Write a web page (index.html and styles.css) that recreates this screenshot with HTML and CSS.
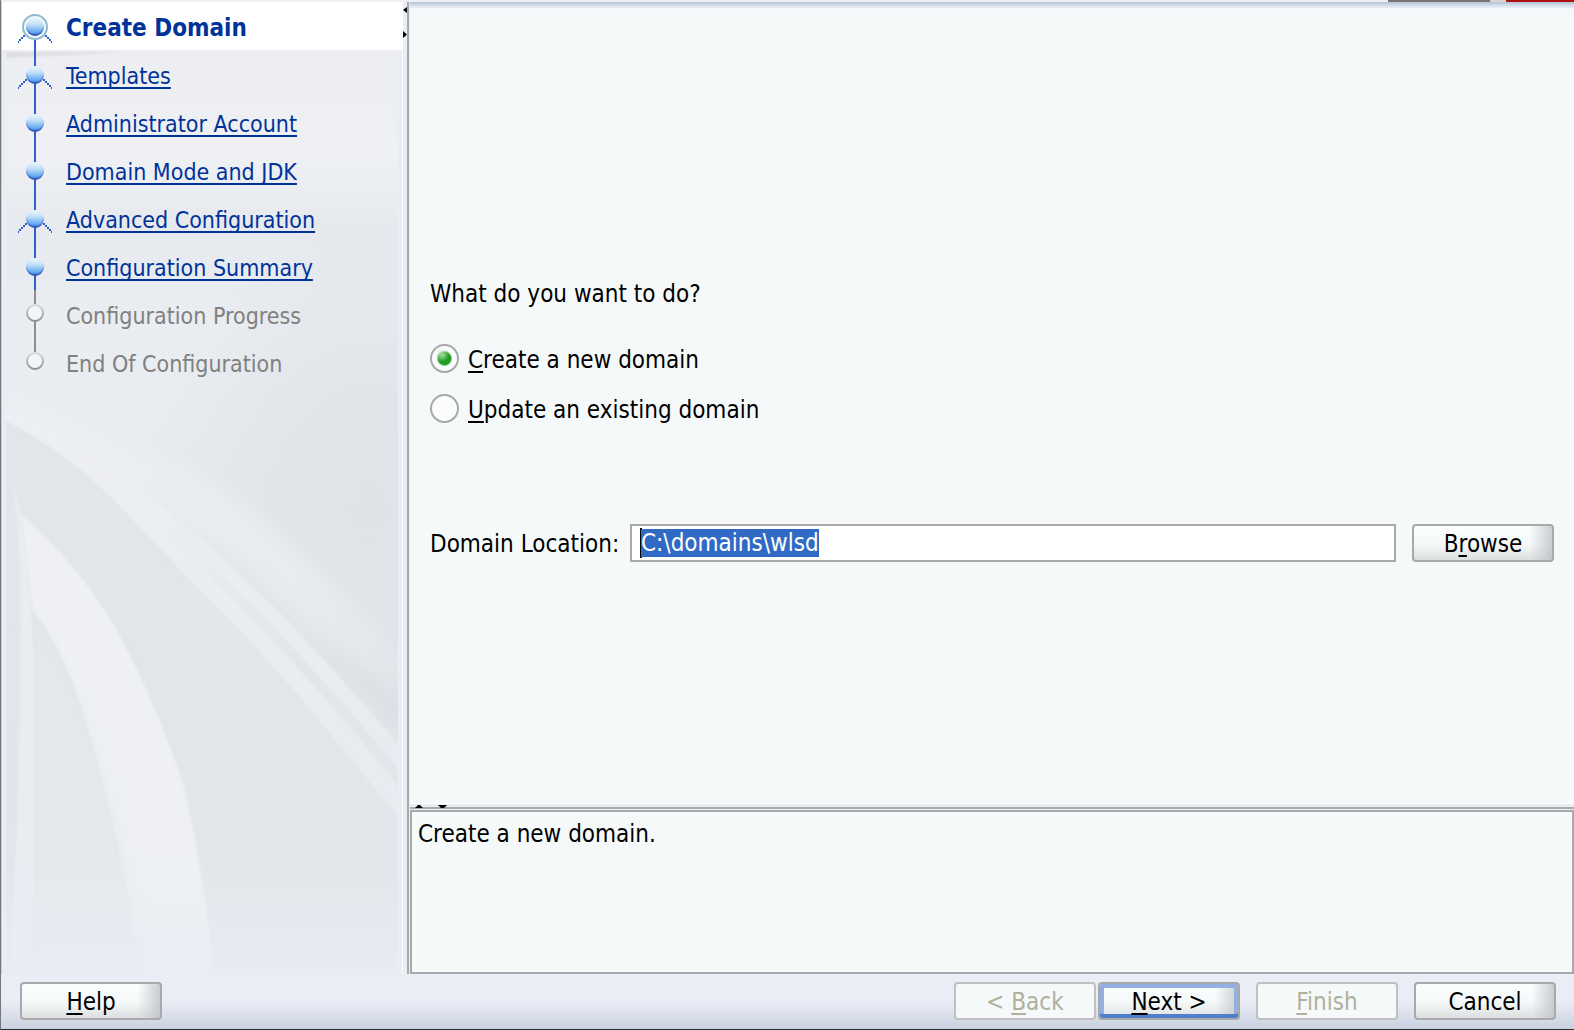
FILE: index.html
```html
<!DOCTYPE html>
<html lang="en">
<head>
<meta charset="utf-8">
<title>Configuration Wizard</title>
<link rel="stylesheet" href="styles.css">
</head>
<body>
<svg class="defs" aria-hidden="true">
  <defs>
    <linearGradient id="ball" x1="0" y1="0" x2="0" y2="1">
      <stop offset="0" stop-color="#eef5fc"/><stop offset=".4" stop-color="#c4e0f8"/>
      <stop offset=".9" stop-color="#5fa6f0"/><stop offset="1" stop-color="#4a86e4"/>
    </linearGradient>
    <linearGradient id="rim" x1="0" y1="0" x2="0" y2="1">
      <stop offset=".3" stop-color="#cfe2f5"/><stop offset=".65" stop-color="#5f8fe0"/><stop offset="1" stop-color="#2a48ac"/>
    </linearGradient>
    <linearGradient id="off" x1="0" y1="0" x2="0" y2="1">
      <stop offset="0" stop-color="#dcdcdc"/><stop offset="1" stop-color="#8e8e8e"/>
    </linearGradient>
    <g id="node"><circle cx="20" cy="25" r="9" fill="url(#rim)"/><circle cx="20" cy="24" r="8" fill="url(#ball)"/></g>
    <path id="legs" d="M12 30h-2v2h-2v2h-2v2h-2v2h-1M28 30h2v2h2v2h2v2h2v2h1" stroke="#2f5fd0" stroke-width="2" stroke-dasharray="2 2"/>
  </defs>
</svg>
<div class="strip"></div>
<main class="wizard">
  <nav class="sidebar" aria-label="Steps">
    <svg class="art" viewBox="6 50 392 924" preserveAspectRatio="none" aria-hidden="true">
      <defs>
        <linearGradient id="base" x1="0" y1="0" x2="0" y2="1">
          <stop offset="0" stop-color="#eceef2"/><stop offset=".12" stop-color="#eef0f4"/>
          <stop offset=".19" stop-color="#e6e9ed"/><stop offset=".3" stop-color="#eaedf1"/>
          <stop offset=".42" stop-color="#e8ebef"/><stop offset=".6" stop-color="#e3e6ea"/><stop offset="1" stop-color="#e1e4e8"/>
        </linearGradient>
        <radialGradient id="shade">
          <stop offset="0" stop-color="#dfe2e7" stop-opacity=".9"/><stop offset=".4" stop-color="#dfe2e7" stop-opacity=".7"/><stop offset="1" stop-color="#dfe2e7" stop-opacity="0"/>
        </radialGradient>
        <linearGradient id="fade" x1="0" y1="0" x2="0" y2="1">
          <stop offset="0" stop-color="#eaedf4" stop-opacity="0"/><stop offset="1" stop-color="#eaedf4" stop-opacity=".8"/>
        </linearGradient>
        <linearGradient id="band" gradientUnits="userSpaceOnUse" x1="60" y1="430" x2="398" y2="720">
          <stop offset="0" stop-color="#ebeef2"/><stop offset=".6" stop-color="#e8ebf0"/><stop offset="1" stop-color="#e2e5e9"/>
        </linearGradient>
        <linearGradient id="rib" gradientUnits="userSpaceOnUse" x1="60" y1="430" x2="398" y2="780">
          <stop offset="0" stop-color="#ecEFF3"/><stop offset="1" stop-color="#e8ebef"/>
        </linearGradient>
        <linearGradient id="core" gradientUnits="userSpaceOnUse" x1="170" y1="530" x2="300" y2="680">
          <stop offset="0" stop-color="#e2e5e9" stop-opacity="0"/><stop offset="1" stop-color="#e2e5e9"/>
        </linearGradient>
        <filter id="s1"><feGaussianBlur stdDeviation="1"/></filter>
        <filter id="s6" x="-20%" y="-20%" width="140%" height="140%"><feGaussianBlur stdDeviation="8"/></filter>
      </defs>
      <rect x="6" y="50" width="392" height="924" fill="url(#base)"/>
      <ellipse cx="370" cy="500" rx="220" ry="290" fill="url(#shade)"/>
      <path d="M6 52H130L6 58Z" fill="#dddfe3" filter="url(#s1)"/>
      <path d="M0 385Q110 425 213 485Q300 540 398 650V710Q280 600 167 510L0 430Z" fill="url(#band)" filter="url(#s6)"/>
      <path d="M200 530Q290 605 410 745V700Q300 635 230 560Z" fill="#dadde2" opacity=".7" filter="url(#s6)"/>
      <path d="M-10 411Q68 449 127 513Q190 575 247 637L300 697L410 830V990H-10Z" fill="#e2e5e9" filter="url(#s1)"/>
      <path d="M-10 400Q90 440 167 510L213 550L280 613L333 670L410 757V831L300 697L247 637L187 577L127 513Q68 449 -10 413Z" fill="url(#rib)" filter="url(#s1)"/>
      <path d="M150 515Q290 640 410 792" fill="none" stroke="url(#core)" stroke-width="10" filter="url(#s1)"/>
      <path d="M21 515Q75 560 115 627Q160 710 185 790Q205 880 215 984H140Q125 850 85 720Q65 650 33 610Z" fill="#eef0f4" filter="url(#s1)"/>
      <path d="M33 625Q75 690 95 760Q125 850 145 984H34Z" fill="#e5e8ec" filter="url(#s6)"/>
      <path d="M8 465Q24 520 20 690Q18 860 8 984H32Q36 800 33 650Q30 560 21 515Z" fill="#e9ecf1" filter="url(#s1)"/>
      <rect x="6" y="850" width="392" height="124" fill="url(#fade)"/>
    </svg>
    <ol class="steps">
      <li class="step current" aria-current="step">
        <svg class="mark" viewBox="0 0 40 48"><path d="M20 38V48" stroke="#2f5fd0" stroke-width="2"/><use href="#legs" y="2"/><circle cx="20" cy="25" r="12" fill="#f3f8fd" stroke="#8dbbd0" stroke-width="2"/><use href="#node"/></svg>
        <span>Create Domain</span></li>
      <li class="step">
        <svg class="mark" viewBox="0 0 40 48"><path d="M20 0V48" stroke="#2f5fd0" stroke-width="2"/><use href="#legs"/><use href="#node"/></svg>
        <a href="#templates">Templates</a></li>
      <li class="step">
        <svg class="mark" viewBox="0 0 40 48"><path d="M20 0V48" stroke="#2f5fd0" stroke-width="2"/><use href="#node"/></svg>
        <a href="#account">Administrator Account</a></li>
      <li class="step">
        <svg class="mark" viewBox="0 0 40 48"><path d="M20 0V48" stroke="#2f5fd0" stroke-width="2"/><use href="#node"/></svg>
        <a href="#mode">Domain Mode and JDK</a></li>
      <li class="step">
        <svg class="mark" viewBox="0 0 40 48"><path d="M20 0V48" stroke="#2f5fd0" stroke-width="2"/><use href="#legs"/><use href="#node"/></svg>
        <a href="#advanced">Advanced Configuration</a></li>
      <li class="step">
        <svg class="mark" viewBox="0 0 40 48"><path d="M20 0V48" stroke="#2f5fd0" stroke-width="2"/><use href="#node"/></svg>
        <a href="#summary">Configuration Summary</a></li>
      <li class="step pending">
        <svg class="mark" viewBox="0 0 40 48"><path d="M20 0V48" stroke="#8e8e92" stroke-width="2"/><circle cx="20" cy="23" r="8" fill="#f4f5f7" stroke="url(#off)" stroke-width="2"/></svg>
        <span>Configuration Progress</span></li>
      <li class="step pending">
        <svg class="mark" viewBox="0 0 40 48"><path d="M20 0V20" stroke="#8e8e92" stroke-width="2"/><circle cx="20" cy="23" r="8" fill="#f4f5f7" stroke="url(#off)" stroke-width="2"/></svg>
        <span>End Of Configuration</span></li>
    </ol>
  </nav>
  <div class="splitter">
    <svg width="4" height="32" viewBox="0 0 4 32" aria-hidden="true"><path d="M4 0V6L0 3ZM0 24V31L4 27.500Z"/></svg>
  </div>
  <div class="content">
    <form class="form" id="wizard-form">
      <fieldset class="choices">
        <legend>What do you want to do?</legend>
        <label class="choice"><input type="radio" name="action" checked><span><u>C</u>reate a new domain</span></label>
        <label class="choice"><input type="radio" name="action"><span><u>U</u>pdate an existing domain</span></label>
      </fieldset>
      <div class="location">
        <label for="location">Domain Location:</label>
        <input class="field" id="location" type="text" value="C:\domains\wlsd" spellcheck="false">
        <button class="button" type="button"><span>B<u>r</u>owse</span></button>
      </div>
    </form>
    <div class="hsplitter">
      <svg width="32" height="3" viewBox="0 0 32 3" aria-hidden="true"><path d="M0 3L3 0H5L8 3ZM23 0H32L29 3H26Z"/></svg>
    </div>
    <section class="message">Create a new domain.</section>
  </div>
</main>
<footer class="footer">
  <button class="button help" type="button"><span><u>H</u>elp</span></button>
  <div class="pair">
    <button class="button" type="button" disabled><span>&lt; <u>B</u>ack</span></button>
    <button class="button default" type="button"><span><u>N</u>ext &gt;</span></button>
  </div>
  <button class="button" type="button" disabled><span><u>F</u>inish</span></button>
  <button class="button" type="button"><span>Cancel</span></button>
</footer>
<script src="script.js"></script>
</body>
</html>
```
FILE: styles.css
```css
* { box-sizing: border-box; }

body {
  margin: 0;
  min-height: 100vh;
  display: flex;
  flex-direction: column;
  background: #eaedf6;
  border-left: 1px solid #77777b;
  border-bottom: 1px solid #2c2c30;
  color: #000;
  font: 24px/30px "DejaVu Sans Condensed", Tahoma, sans-serif;
}

button, input { font: inherit; color: inherit; }

u, .step a {
  text-decoration: underline;
  text-decoration-thickness: 2px;
  text-underline-offset: 3px;
  text-decoration-skip-ink: none;
}

.defs { position: absolute; width: 0; height: 0; }

.strip {
  height: 2px;
  background:
    linear-gradient(#b01010, #b01010) right / 68px 2px no-repeat,
    linear-gradient(#d8d4d4, #d8d4d4) right / 84px 2px no-repeat,
    linear-gradient(#77756f, #77756f) right / 186px 2px no-repeat,
    #eceff4;
}

.wizard { flex: 1; display: flex; }

.sidebar {
  position: relative;
  width: 402px;
  border-left: 1px solid #c9ccd6;
  border-right: 1px solid #fff;
}

.art {
  position: absolute;
  top: 48px;
  left: 4px;
  width: calc(100% - 8px);
  height: calc(100% - 48px);
}

.steps { position: relative; margin: 0; padding: 0; list-style: none; }

.step {
  display: flex;
  align-items: center;
  gap: 11px;
  height: 48px;
  padding-left: 13px;
  font-size: 23px;
  white-space: nowrap;
}

.step a { color: #003399; }
.current { background: #fff; color: #003399; font-size: 24px; font-weight: bold; }
.pending { color: #808080; }
.mark { flex: none; width: 40px; height: 48px; fill: none; }
.step a, .step span, .choice span { padding-top: 4px; }

.splitter {
  display: flex;
  align-items: flex-start;
  width: 6px;
  padding-top: 5px;
  border-right: 2px solid #a9a9a9;
}

.content {
  flex: 1;
  min-width: 0;
  display: flex;
  flex-direction: column;
  padding-left: 1px;
}

.form {
  flex: 1;
  padding: 277px 20px 20px;
  background: linear-gradient(#b4c1d8, #f5f9fa 7px);
}

.choices { margin: 0; padding: 0; border: 0; }
.choices legend { padding: 0; margin-bottom: 32px; }

.choice {
  display: flex;
  align-items: center;
  gap: 9px;
  width: max-content;
  margin-bottom: 16px;
}

.choice input {
  appearance: none;
  width: 29px;
  height: 29px;
  margin: 0;
  border: 2px solid #a9a9a9;
  border-radius: 50%;
  background: #fbfcfe;
}

.choice input:checked {
  background:
    radial-gradient(circle at 40% 35%, rgba(190, 228, 190, .9), rgba(190, 228, 190, 0) 7px),
    radial-gradient(circle, #1f9d1f 6px, #fbfcfe 8px);
}

.location {
  display: grid;
  grid-template-columns: 184px 1fr 142px;
  align-items: center;
  gap: 16px;
  margin-top: 83px;
}

.location label { padding-top: 2px; white-space: nowrap; }

.field {
  min-width: 0;
  height: 38px;
  padding: 2px 8px 2px 9px;
  border: 2px solid #a9a9a9;
  border-radius: 0;
  outline: 0;
  background: linear-gradient(#000, #000) 8px center / 2px 30px no-repeat #fff;
}

.field::selection { background: #316ac5; color: #fff; }

.button {
  width: 142px;
  height: 38px;
  padding: 2px 0 0;
  border: 2px solid #a9a9a9;
  border-radius: 4px;
  background:
    linear-gradient(90deg, rgba(190, 194, 196, 0) 84%, rgba(190, 194, 196, .8)),
    linear-gradient(#fcfefe, #f4f8f9 55%, #dcdfdf);
}

.button:disabled { border-color: #c0c0c0; background: #f5f9fa; color: #b0b09c; }
.default { box-shadow: inset 0 -4px 0 #5080cc, inset 0 0 0 4px #94b0e0; }

.hsplitter {
  display: flex;
  height: 6px;
  padding: 1px 0 0 5px;
  border-top: 1px solid #fff;
  border-bottom: 2px solid #a9a9a9;
}

.message {
  height: 164px;
  margin-top: 1px;
  padding: 7px 6px;
  border: 2px solid #a9a9a9;
  background: #f5f9fa;
}

.footer {
  display: flex;
  align-items: center;
  gap: 16px;
  height: 55px;
  padding: 0 18px 1px 19px;
  background: linear-gradient(#eaedf6 50%, #c9d1df);
}

.help { margin-right: auto; }
.pair { display: flex; gap: 2px; }
```
FILE: script.js
```js
const field = document.getElementById('location');
field.focus();
field.select();
```
